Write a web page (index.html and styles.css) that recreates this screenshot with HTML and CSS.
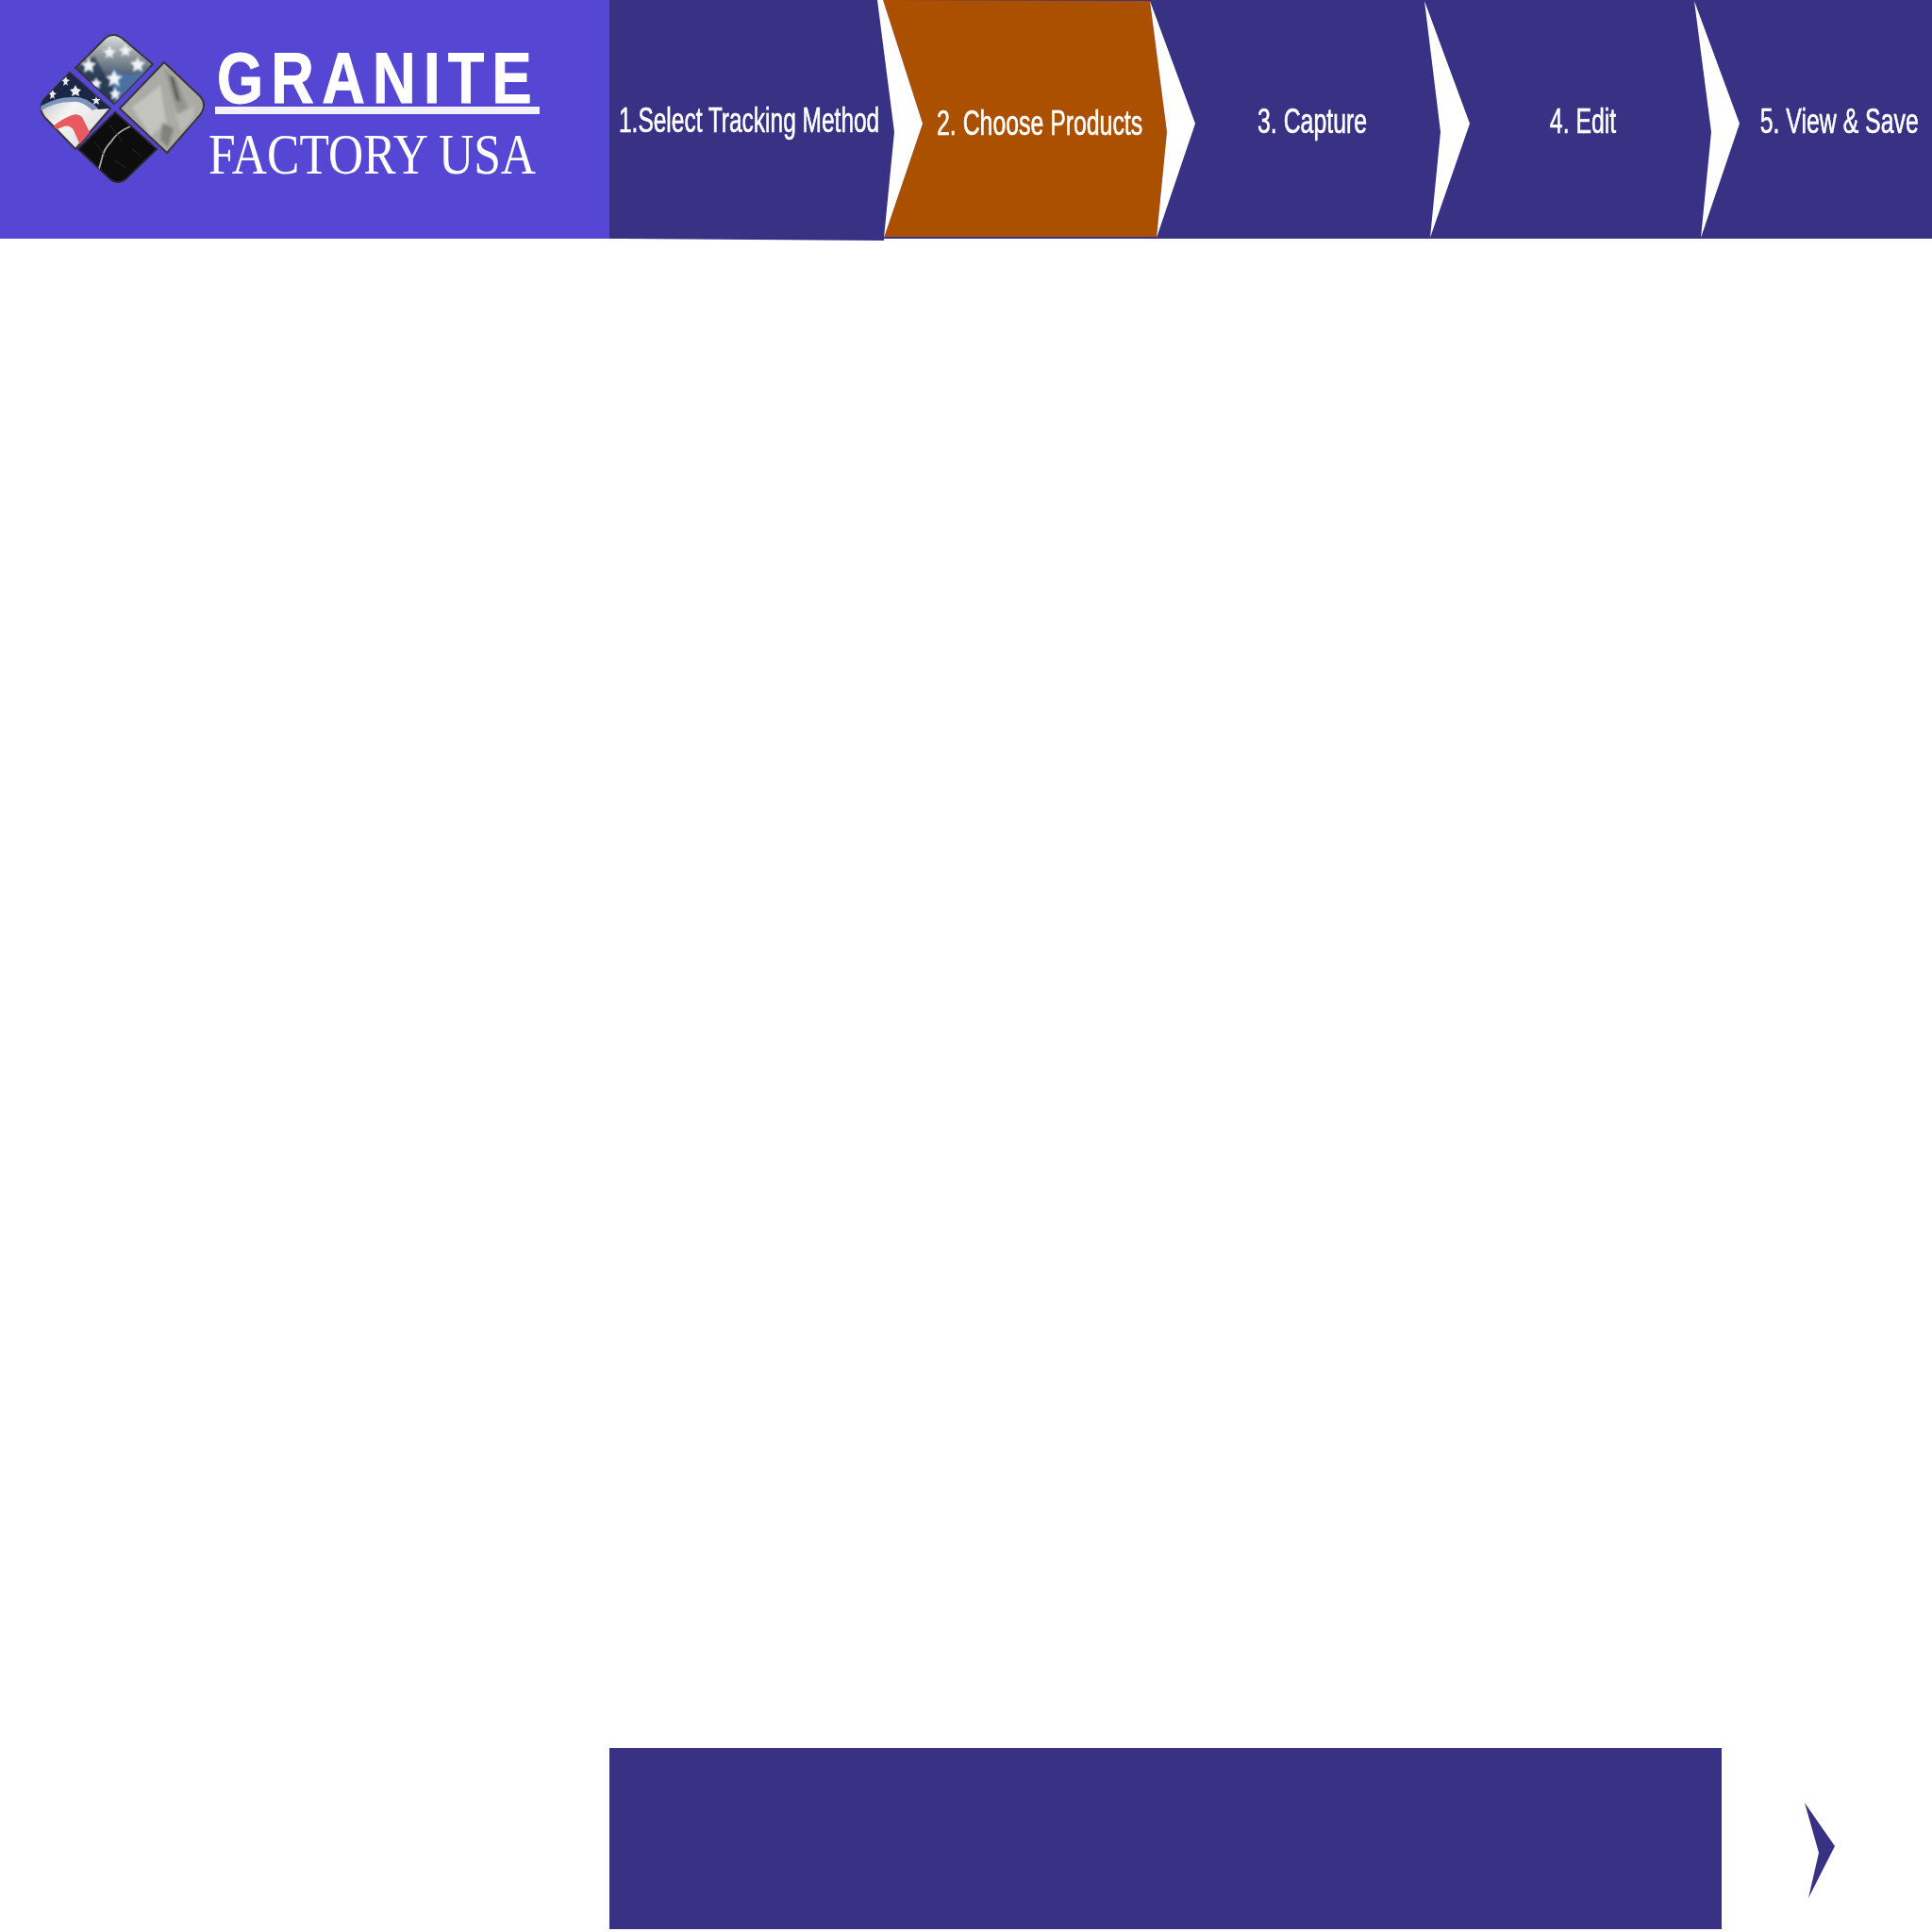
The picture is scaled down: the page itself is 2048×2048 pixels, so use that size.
FILE: index.html
```html
<!DOCTYPE html>
<html lang="en">
<head>
<meta charset="utf-8">
<title>Granite Factory USA</title>
<link rel="stylesheet" href="styles.css">
</head>
<body>
<div class="page">
  <header class="header">
    <div class="brand">
      <svg class="mark" width="226" height="252" viewBox="0 0 226 252" aria-hidden="true">
        <defs>
          <filter id="soft"><feGaussianBlur stdDeviation="0.6"/></filter>
          <filter id="softer"><feGaussianBlur stdDeviation="0.9"/></filter>
          <filter id="stone"><feGaussianBlur stdDeviation="1.5"/></filter>
          <linearGradient id="gTop" x1="0.55" y1="0" x2="0.5" y2="1">
            <stop offset="0" stop-color="#dfe2e2"/><stop offset=".3" stop-color="#8f999f"/><stop offset=".62" stop-color="#46586f"/><stop offset="1" stop-color="#2c3f63"/>
          </linearGradient>
          <linearGradient id="gFlagWhite" x1="0" y1="0" x2="1" y2="1">
            <stop offset="0" stop-color="#a0a1a7"/><stop offset=".45" stop-color="#f6f5f5"/><stop offset="1" stop-color="#d6d6d8"/>
          </linearGradient>
          <clipPath id="cTop"><path d="M80 72 L111 41 Q120 33 130 41 L162 68 L121 110 Z"/></clipPath>
          <clipPath id="cFlag"><path d="M74 77 L117 115 L80 158 L47 124 Q40 115 46 106 Z"/></clipPath>
          <clipPath id="cStone"><path d="M174 66 L212 102 Q220 111 212 122 L177 162 L127 115 Z"/></clipPath>
          <clipPath id="cBlack"><path d="M122 119 L166 158 L134 189 Q125 197 116 189 L83 158 Z"/></clipPath>
        </defs>
        <g filter="url(#soft)">
          <path d="M80 72 L111 41 Q120 33 130 41 L162 68 L121 110 Z" fill="url(#gTop)" stroke="#3a3438" stroke-width="2"/>
          <g clip-path="url(#cTop)">
            <path d="M80 72 L100 60 L124 100 L121 110 Z" fill="#24324e" opacity=".7" filter="url(#softer)"/>
            <path d="M118 72 Q136 84 150 76 L162 68 L121 112 Z" fill="#4f74ad" opacity=".85" filter="url(#softer)"/>
            <g fill="#f1f4f6" filter="url(#softer)">
              <path d="M94 60 l2 6 6 1 -4 4 1 6 -5-3 -5 3 1-6 -4-4 6-1z"/>
              <path d="M121 74 l3 6 6 1 -5 4 2 7 -6-4 -6 4 2-7 -5-4 6-1z"/>
              <path d="M146 60 l2 5 6 1 -4 4 1 6 -5-3 -5 3 1-6 -4-4 6-1z"/>
              <path d="M116 48 l2 5 5 1 -4 3 1 5 -4-3 -4 3 1-5 -4-3 5-1z"/>
              <path d="M133 46 l2 5 5 1 -4 3 1 5 -4-3 -4 3 1-5 -4-3 5-1z"/>
              <path d="M122 92 l2 5 4 1 -3 3 1 5 -4-3 -4 3 1-5 -3-3 4-1z"/>
              <path d="M102 82 l2 4 4 1 -3 3 1 4 -4-2 -4 2 1-4 -3-3 4-1z"/>
            </g>
          </g>

          <path d="M174 66 L212 102 Q220 111 212 122 L177 162 L127 115 Z" fill="#ababa6" stroke="#3a3438" stroke-width="2"/>
          <g clip-path="url(#cStone)" filter="url(#stone)">
            <path d="M174 72 L188 86 L198 112 L208 122 L192 130 L182 100 Z" fill="#8a8a85" opacity=".7"/>
            <path d="M180 80 L184 82 L191 108 L187 106 Z" fill="#55554f"/>
            <path d="M140 114 L170 90 L176 130 L160 144 Z" fill="#c4c4bf"/>
            <path d="M172 130 L184 136 L178 156 L170 148 Z" fill="#82827d"/>
            <path d="M186 122 L206 112 L206 124 L192 140 Z" fill="#bbbbb6"/>
          </g>

          <path d="M74 77 L117 115 L80 158 L47 124 Q40 115 46 106 Z" fill="url(#gFlagWhite)" stroke="#3a3438" stroke-width="2"/>
          <g clip-path="url(#cFlag)">
            <path d="M74 77 L117 115 L104 116 Q90 102 76 104 Q58 104 42 114 L40 106 Z" fill="#1d2846"/>
            <path d="M42 113 Q60 103 76 103 Q90 101 104 115 L98 117 Q86 106 76 108 Q58 108 42 118 Z" fill="#7e95bb"/>
            <path d="M57 133 Q68 125 74 123 Q82 119 87 124 L96 142 L85 154 L78 138 Q74 132 68 134 L58 138 Z" fill="#e85a5e" filter="url(#soft)"/>
            <g fill="#eceff2" filter="url(#soft)">
              <path d="M80 90 l2 4 4 1 -3 3 1 4 -4-2 -4 2 1-4 -3-3 4-1z"/>
              <path d="M102 102 l1 3 4 0 -3 2 1 4 -3-2 -3 2 1-4 -3-2 4 0z"/>
              <path d="M70 81 l1 3 3 1 -3 2 1 4 -2-2 -3 2 1-4 -3-2 3-1z"/>
              <path d="M56 95 l1 3 3 1 -3 2 1 4 -2-2 -3 2 1-4 -3-2 3-1z"/>
            </g>
          </g>

          <path d="M122 119 L166 158 L134 189 Q125 197 116 189 L83 158 Z" fill="#0b0a0c" stroke="#2a2529" stroke-width="2"/>
          <g clip-path="url(#cBlack)">
            <path d="M138 134 Q124 140 118 150 Q110 158 108 168 Q106 176 104 182" fill="none" stroke="#a8a8a8" stroke-width="1.8"/>
            <path d="M116 132 L130 150 M140 158 L150 166 M100 150 L112 166 M122 170 L134 178" fill="none" stroke="#2e2e2e" stroke-width="1"/>
          </g>
        </g>
      </svg>
      <div class="wordmark">
        <div class="granite"><span class="granite-text">GRANITE</span></div>
        <div class="rule"></div>
        <div class="factory"><span class="factory-text">FACTORY USA</span></div>
      </div>
    </div>
    <nav class="steps">
      <div class="step step-1"><span class="label label-long">1.Select Tracking Method</span></div>
      <div class="step step-2"><span class="label">2. Choose Products</span></div>
      <div class="step step-3"><span class="label">3. Capture</span></div>
      <div class="step step-4"><span class="label">4. Edit</span></div>
      <div class="step step-5"><span class="label">5. View &amp; Save</span></div>
      <svg class="chevrons" width="1402" height="256" viewBox="646 0 1402 256" aria-hidden="true">
        <path class="base-lip" d="M660 253 L937 253 L937 255 Z"/>
        <path class="active-shape" d="M936 0 L1219 1 L1237 140 L1226 251 L937 251 L978 131 Z"/>
        <path class="cut" d="M930 0 L936 0 L978 131 L937 252 L948 140 Z"/>
        <path class="cut" d="M1219 1 L1267 131 L1226 252 L1237 140 Z"/>
        <path class="cut" d="M1510 1 L1558 131 L1516 252 L1527 140 Z"/>
        <path class="cut" d="M1796 1 L1844 131 L1803 252 L1814 140 Z"/>
      </svg>
    </nav>
  </header>
  <footer class="footer">
    <div class="footer-bar"></div>
    <svg class="next" width="32" height="101" viewBox="0 0 32 101" aria-hidden="true">
      <path d="M0 0 L32 46 L4 101 L15 53 Z" fill="#393183"/>
    </svg>
  </footer>
</div>
</body>
</html>
```

FILE: styles.css
```css
* { box-sizing: border-box; }
html, body { margin: 0; padding: 0; background: #fff; }
.page {
  width: 2048px;
  height: 2048px;
  display: flex;
  flex-direction: column;
  justify-content: space-between;
  padding-bottom: 3px;
}
.header { display: flex; height: 253px; }
.brand {
  width: 646px;
  background: #5547d4;
  display: flex;
  flex: none;
}
.mark { flex: none; }
.wordmark {
  width: 352px;
  margin-left: -4px;
  padding-top: 45px;
  display: flex;
  flex-direction: column;
  color: #fff;
}
.granite { height: 68px; line-height: 80px; padding-left: 8px; white-space: nowrap; }
.granite-text {
  display: inline-block;
  font: 700 76px/76px "Liberation Sans", Arial, sans-serif;
  letter-spacing: 10px;
  transform: scaleX(.83);
  transform-origin: left center;
  -webkit-text-stroke: 1px #fff;
}
.rule { height: 8px; margin-left: 6px; width: 344px; background: #f3f1fd; flex: none; }
.factory { margin-top: 13px; margin-left: -1px; white-space: nowrap; }
.factory-text {
  display: inline-block;
  font: 400 61px/60px "Liberation Serif", "Times New Roman", serif;
  transform: scaleX(.845);
  transform-origin: left center;
}
.steps {
  position: relative;
  flex: 1;
  display: flex;
  background: #393183;
  color: #fff;
  font: 400 36px/1 "Liberation Sans", Arial, sans-serif;
}
.step {
  display: flex;
  flex: none;
  min-width: 0;
  align-items: center;
  justify-content: center;
  white-space: nowrap;
  padding-top: 4px;
}
.label {
  display: inline-block;
  position: relative;
  z-index: 1;
  flex: none;
  transform: scaleX(.69);
  -webkit-text-stroke: .6px #fff;
}
.label-long { transform: scaleX(.68); }
.step-1 { width: 291px; padding-left: 5px; padding-top: 2px; }
.step-2 { width: 289px; padding-left: 41px; padding-top: 8px; }
.step-3 { width: 290px; padding-left: 40px; }
.step-4 { width: 287px; padding-left: 37px; }
.step-5 { width: 245px; padding-left: 49px; }
.chevrons { position: absolute; left: 0; top: 0; pointer-events: none; z-index: 0; }
.active-shape { fill: #aa5000; }
.base-lip { fill: #393183; }
.cut { fill: #fff; }
.footer { display: flex; align-items: flex-start; height: 192px; padding-left: 646px; }
.footer-bar { width: 1179px; height: 100%; background: #393183; }
.next { margin-left: 88px; margin-top: 58px; flex: none; }
```
